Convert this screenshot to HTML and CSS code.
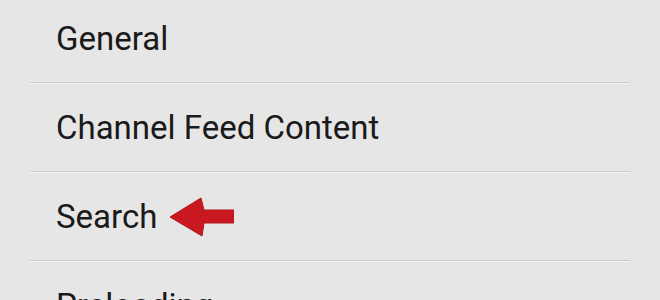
FILE: index.html
```html
<!DOCTYPE html>
<html>
<head>
<meta charset="utf-8">
<link rel="stylesheet" href="styles.css">
</head>
<body>
<ul class="settings">
  <li class="item"><span class="label">General</span></li>
  <li class="item"><span class="label">Channel Feed Content</span></li>
  <li class="item">
    <span class="label">Search</span>
    <svg class="arrow" width="64" height="40" viewBox="0 0 64 40">
      <polygon points="0,20 31,1 34,13 64,13 64,26 34,26 32,39" fill="#c9181f" stroke="#b3161c" stroke-width="1" stroke-linejoin="round"/>
    </svg>
  </li>
  <li class="item"><span class="label">Preloading</span></li>
</ul>
</body>
</html>
```
FILE: styles.css
```css
html, body {
  margin: 0;
  padding: 0;
  background: #e6e6e6;
  overflow: hidden;
}
body {
  width: 660px;
  height: 300px;
  font-family: Roboto, "Noto Sans", sans-serif;
}
.settings {
  list-style: none;
  margin: -5px 30px 0 30px;
  padding: 0;
}
.item {
  height: 87px;
  display: flex;
  align-items: center;
  padding-left: 26px;
  border-bottom: 1px solid #cccccc;
  box-shadow: 0 1px 0 #f1f1f1;
  margin-bottom: 1px;
}
.label {
  font-size: 33px;
  color: #1a1a1a;
  line-height: 1;
}
.arrow {
  margin-left: 13px;
  display: block;
}
```
